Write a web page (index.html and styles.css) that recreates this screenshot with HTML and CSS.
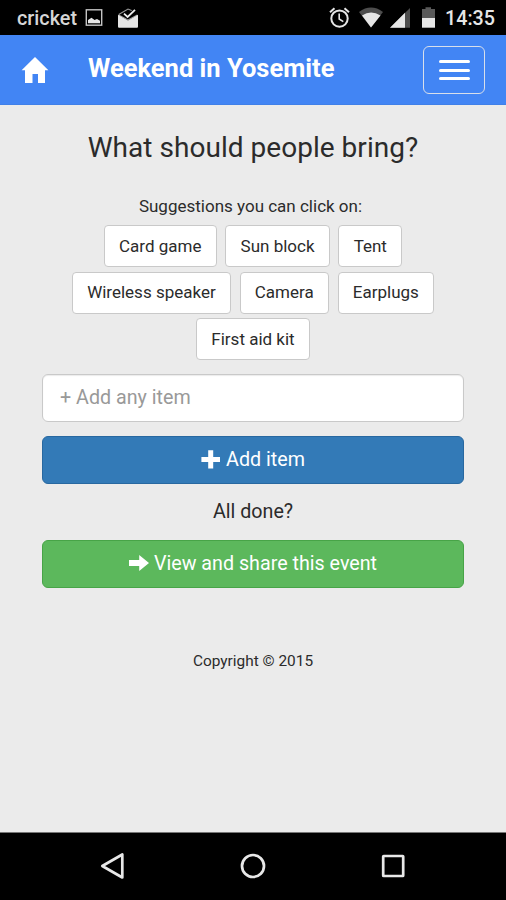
FILE: index.html
```
<!DOCTYPE html>
<html lang="en">
<head>
<meta charset="utf-8">
<title>Weekend in Yosemite</title>
<link rel="stylesheet" href="styles.css">
</head>
<body>
<div class="status">
  <span class="carrier">cricket</span>
  <svg class="status-left" width="56" height="35" viewBox="84 0 56 35">
    <rect x="86.3" y="9.8" width="15.4" height="15.4" fill="none" stroke="#c4c4c4" stroke-width="1.4"/>
    <path d="M88 23.2V20L91.5 17.8 94.5 20 97 19 100 20.7V23.2Z" fill="#e6e6e6"/>
    <path d="M118.7 14.5 128 9 134 11.5M118.7 15 128 20 137.3 15" fill="none" stroke="#999" stroke-width="1.1"/>
    <path d="M118 14.8 128 20.5 138 14.8V26.5Q138 27.7 137 27.7H119Q118 27.7 118 26.5Z" fill="#e6e6e6"/>
    <path d="M124 13.6 127.6 17 135 9.8" fill="none" stroke="#000" stroke-width="3.4"/>
    <path d="M124 13.6 127.6 17 135 9.8" fill="none" stroke="#eee" stroke-width="1.8"/>
  </svg>
  <svg class="status-right" width="112" height="35" viewBox="327 0 112 35">
    <g fill="none" stroke="#e6e6e6">
      <circle cx="339.5" cy="18.6" r="8.2" stroke-width="2"/>
      <path d="M330 12.2 334.5 8.3M349 12.2 344.5 8.3" stroke-width="2"/>
      <path d="M339.2 13.5V19L343.3 21.7" stroke-width="1.6"/>
    </g>
    <path d="M359 12Q371 3.2 383 12L371 27.5Z" fill="#4d4d4d"/>
    <path d="M362 15.5Q371 9.5 380.5 15.5L371 27.5Z" fill="#e6e6e6"/>
    <path d="M410 8V27.7H390Z" fill="#4d4d4d"/>
    <path d="M405 12.8V27.7H390Z" fill="#e6e6e6"/>
    <path d="M422 9H425.5V7.2H431V9H435V18H422Z" fill="#595959"/>
    <path d="M422 18H435V27.7H422Z" fill="#e6e6e6"/>
  </svg>
  <span class="clock">14:35</span>
</div>
<header class="navbar">
  <svg class="home" width="28" height="28" viewBox="0 0 28 28"><path d="M14 1 27.4 14.3H24V27H17V18H11.5V27H4V14.3H.6Z" fill="#fff"/></svg>
  <h1 class="brand">Weekend in Yosemite</h1>
  <button class="menu" aria-label="Menu"><span class="bar"></span><span class="bar"></span><span class="bar"></span></button>
</header>
<main class="content">
  <h2 class="title">What should people bring?</h2>
  <p class="hint">Suggestions you can click on:</p>
  <div class="chips">
    <div class="row"><button class="chip">Card game</button><button class="chip">Sun block</button><button class="chip">Tent</button></div>
    <div class="row"><button class="chip">Wireless speaker</button><button class="chip">Camera</button><button class="chip">Earplugs</button></div>
    <div class="row"><button class="chip">First aid kit</button></div>
  </div>
  <input class="field" type="text" placeholder="+ Add any item">
  <button class="action add"><svg width="20" height="20" viewBox="0 0 20 20"><path d="M7.2.2H12.2V6.9H19V11.9H12.2V18.6H7.2V11.9H.4V6.9H7.2Z" fill="#fff"/></svg><span class="add-label">Add item</span></button>
  <p class="done">All done?</p>
  <button class="action share"><svg width="20" height="20" viewBox="0 0 20 20"><path d="M0 6H10.2V1.1L20 9.1 10.2 17.1V12.1H0Z" fill="#fff"/></svg><span class="share-label">View and share this event</span></button>
  <footer class="copyright">Copyright © 2015</footer>
</main>
<nav class="system">
  <svg width="28" height="28" viewBox="0 0 28 28"><path d="M3.3 14 23.3 2.5V25.5Z"/></svg>
  <svg width="28" height="28" viewBox="0 0 28 28"><circle cx="14" cy="14" r="11"/></svg>
  <svg width="28" height="28" viewBox="0 0 28 28"><rect x="4.2" y="4" width="20" height="20" rx=".5"/></svg>
</nav>
</body>
</html>
```
FILE: styles.css
```
* { box-sizing: border-box; }
body { margin: 0; height: 900px; display: flex; flex-direction: column; overflow: hidden; background: #ebebeb; color: #2b2b2b; font-family: Roboto, sans-serif; }
h1, h2, p { margin: 0; font-weight: 400; white-space: nowrap; }
button, input { font-family: inherit; white-space: nowrap; }
svg { display: block; flex: none; }
.status { flex: none; height: 35px; background: #000; color: #d6d6d6; display: flex; padding: 0 11px 0 17px; line-height: 38px; font-weight: 500; }
.carrier { width: 67px; font-size: 19.8px; }
.status-right { margin-left: auto; }
.clock { width: 56px; padding-left: 6px; font-size: 19.7px; line-height: 38px; color: #e6e6e6; white-space: nowrap; }
.navbar { flex: none; height: 70px; background: #4285f4; border-bottom: 1px solid #4080e8; display: flex; align-items: center; padding: 0 21px; }
.brand { margin: -3px 0 0 39px; color: #fff; font-size: 25.5px; line-height: 30px; font-weight: 700; }
.menu { margin-left: auto; width: 62px; height: 48px; padding: 1px 0 0; border: 1.5px solid #d9dfea; border-radius: 6px; background: none; display: flex; flex-direction: column; align-items: center; justify-content: center; gap: 5.4px; }
.bar { width: 31px; height: 3px; border-radius: 2px; background: #fff; }
.content { flex: 1; padding: 23px 42px 0; display: flex; flex-direction: column; text-align: center; }
.title { font-size: 28px; line-height: 40px; letter-spacing: .03px; }
.hint { margin: 26px 5px 0 0; font-size: 17px; line-height: 24px; }
.chips { margin-top: 7px; display: grid; gap: 4.5px; }
.row { display: flex; justify-content: center; gap: 8.5px; }
.chip { height: 42px; padding: 0 14.3px 1px; border: 1.5px solid #c9c9c9; border-radius: 4px; background: #fff; color: #2b2b2b; font-size: 17px; }
.field { margin-top: 14px; width: 100%; height: 48px; padding: 0 17px 2px; border: 1.5px solid #c9c9c9; border-radius: 6px; background: #fff; box-shadow: inset 0 1px 1px rgba(0,0,0,.08); font-size: 19.7px; }
.field::placeholder { color: #999; opacity: 1; }
.action { height: 48px; padding: 0 0 1px; border-radius: 6px; display: flex; align-items: center; justify-content: center; gap: 5px; color: #fff; font-size: 19.7px; }
.add { margin-top: 14px; background: #337ab7; border: 1.5px solid #2868a0; }
.done { margin-top: 14px; font-size: 19.7px; line-height: 28px; }
.share { margin-top: 14px; background: #5cb85c; border: 1.5px solid #47a447; }
.copyright { margin-top: 62px; font-size: 15.4px; line-height: 22px; }
.system { flex: none; height: 68px; padding-bottom: 1px; background: #000; border-top: 1px solid #777; display: flex; justify-content: center; align-items: center; gap: 112px; }
.system svg { fill: none; stroke: #e8e8e8; stroke-width: 2.7; stroke-linejoin: round; }
```
